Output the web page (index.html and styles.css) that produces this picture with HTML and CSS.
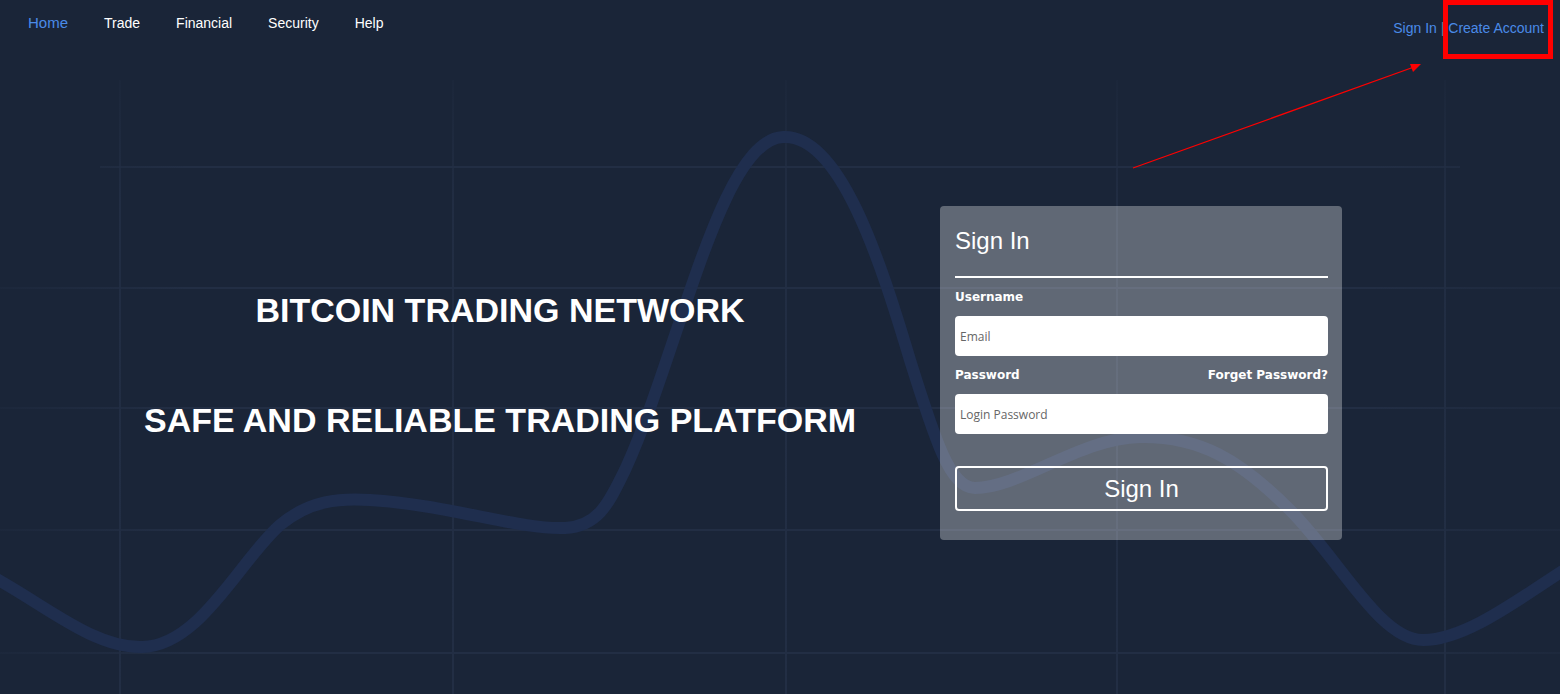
FILE: index.html
```html
<!DOCTYPE html>
<html>
  <head>
    <meta charset="utf-8" />
    <title>Bitcoin Trading Network</title>
    <link rel="stylesheet" href="styles.css">
  </head>
  <body>
    <div class="page">
      <svg class="backdrop" viewBox="0 0 1560 694" preserveAspectRatio="none">
        <defs>
          <linearGradient id="fadeV" gradientUnits="userSpaceOnUse" x1="0" y1="80" x2="0" y2="694">
            <stop offset="0" stop-color="#222e44" stop-opacity="0.2" />
            <stop offset="0.2" stop-color="#222e44" stop-opacity="0.9" />
            <stop offset="1" stop-color="#222e44" stop-opacity="1" />
          </linearGradient>
          <linearGradient id="fadeH" gradientUnits="userSpaceOnUse" x1="0" y1="0" x2="1560" y2="0">
            <stop offset="0" stop-color="#222e44" stop-opacity="0.3" />
            <stop offset="0.12" stop-color="#222e44" stop-opacity="1" />
            <stop offset="0.88" stop-color="#222e44" stop-opacity="1" />
            <stop offset="1" stop-color="#222e44" stop-opacity="0.4" />
          </linearGradient>
        </defs>
        <g stroke="url(#fadeV)" stroke-width="2">
          <line x1="120" y1="80" x2="120" y2="694" />
          <line x1="453" y1="80" x2="453" y2="694" />
          <line x1="786" y1="80" x2="786" y2="694" />
          <line x1="1117" y1="80" x2="1117" y2="694" />
          <line x1="1445" y1="80" x2="1445" y2="694" />
        </g>
        <g stroke="url(#fadeH)" stroke-width="2">
          <line x1="100" y1="167" x2="1460" y2="167" />
          <line x1="0" y1="288" x2="1560" y2="288" />
          <line x1="0" y1="408" x2="1560" y2="408" />
          <line x1="0" y1="530" x2="1560" y2="530" />
          <line x1="0" y1="653" x2="1560" y2="653" />
        </g>
        <path class="wave"
          d="M -20,570 C 40,600 90,648 142,647 C 200,646 240,560 280,525 C 310,500 340,498 370,500 C 450,505 520,530 565,528 C 600,526 610,500 625,470 C 680,350 720,140 783,137 C 840,134 880,260 910,360 C 935,440 950,488 975,488 C 1020,488 1080,438 1140,437 C 1200,436 1240,460 1290,510 C 1340,560 1380,640 1423,640 C 1470,640 1530,590 1580,560" />
      </svg>

      <header class="topbar">
        <nav class="menu">
          <a class="menu-item active" href="#">Home</a>
          <a class="menu-item" href="#">Trade</a>
          <a class="menu-item" href="#">Financial</a>
          <a class="menu-item" href="#">Security</a>
          <a class="menu-item" href="#">Help</a>
        </nav>
        <div class="account">
          <a href="#">Sign In</a> <span class="sep">|</span> <a href="#">Create Account</a>
        </div>
      </header>

      <main class="hero">
        <div class="slogan">
          <h1>BITCOIN TRADING NETWORK</h1>
          <h2>SAFE AND RELIABLE TRADING PLATFORM</h2>
        </div>

        <form class="login-card">
          <div class="card-title">Sign In</div>
          <div class="field-label">Username</div>
          <input class="field" type="text" placeholder="Email" />
          <div class="field-label split">
            <span>Password</span>
            <a href="#">Forget Password?</a>
          </div>
          <input class="field" type="password" placeholder="Login Password" />
          <button class="submit" type="button">Sign In</button>
        </form>
      </main>

      <svg class="pointer" viewBox="0 0 1560 694">
        <line x1="1133" y1="168" x2="1414" y2="67" stroke="#ff0000" stroke-width="1.2" />
        <polygon points="1421,64 1410,64 1413,72" fill="#ff0000" />
      </svg>
      <div class="highlight"></div>
    </div>
  </body>
</html>
```

FILE: styles.css
```css
body {
  margin: 0;
  background-color: #1a2538;
  font: 14px 'Liberation Sans', Arial, sans-serif;
  color: #fff;
  overflow: hidden;
}
.page {
  position: relative;
  width: 1560px;
  height: 694px;
  overflow: hidden;
}
.backdrop {
  position: absolute;
  left: 0;
  top: 0;
  width: 100%;
  height: 100%;
  z-index: 0;
}
.wave {
  fill: none;
  stroke: #1f2e4e;
  stroke-width: 12;
  stroke-linecap: round;
}
.topbar {
  position: relative;
  z-index: 1;
  display: flex;
  justify-content: space-between;
  align-items: flex-start;
  height: 46px;
}
.menu {
  display: flex;
  padding-left: 10px;
}
.menu-item {
  padding: 0 18px;
  line-height: 46px;
  font-size: 14px;
  color: #fff;
  text-decoration: none;
}
.menu-item.active {
  font-size: 15px;
  color: #4a8be8;
}
.account {
  margin-top: 19px;
  padding-right: 16px;
  line-height: 18px;
  font-size: 14px;
  color: #4a8be8;
}
.account a {
  color: #4a8be8;
  text-decoration: none;
}
.account .sep {
  color: #6c7f9c;
}
.hero {
  position: relative;
  z-index: 1;
  display: flex;
  align-items: flex-start;
  padding-top: 160px;
}
.slogan {
  width: 940px;
  box-sizing: border-box;
  padding-left: 60px;
  margin-top: 84px;
  text-align: center;
}
.slogan h1,
.slogan h2 {
  margin: 0;
  font-size: 34px;
  line-height: 40px;
  font-weight: bold;
}
.slogan h2 {
  margin-top: 70px;
}
.login-card {
  width: 402px;
  box-sizing: border-box;
  margin: 0;
  padding: 0 14px 29px 15px;
  background-color: rgba(255, 255, 255, 0.31);
  border-radius: 4px;
}
.card-title {
  padding: 20px 0;
  font-size: 24px;
  line-height: 30px;
  border-bottom: 2px solid #fff;
}
.field-label {
  margin-top: 11px;
  font: bold 12px 'DejaVu Sans', Verdana, sans-serif;
  line-height: 16px;
}
.field-label.split {
  display: flex;
  justify-content: space-between;
}
.field-label a {
  color: #fff;
  text-decoration: none;
}
.field {
  display: block;
  width: 100%;
  height: 40px;
  box-sizing: border-box;
  margin-top: 11px;
  padding: 0 5px;
  border: 0;
  border-radius: 4px;
  background-color: #fff;
  font: 12px 'Open Sans', sans-serif;
  color: #333;
  outline: none;
}
.field::placeholder {
  color: #666;
}
.submit {
  display: block;
  width: 100%;
  height: 45px;
  margin-top: 32px;
  border: 2px solid #fff;
  border-radius: 4px;
  background-color: transparent;
  font: 24px 'Liberation Sans', Arial, sans-serif;
  color: #fff;
  cursor: pointer;
}
.pointer {
  position: absolute;
  left: 0;
  top: 0;
  width: 1560px;
  height: 694px;
  z-index: 2;
  pointer-events: none;
}
.highlight {
  position: absolute;
  left: 1443px;
  top: 0;
  width: 110px;
  height: 59px;
  box-sizing: border-box;
  border: 5px solid #ff0000;
  z-index: 2;
}
```
